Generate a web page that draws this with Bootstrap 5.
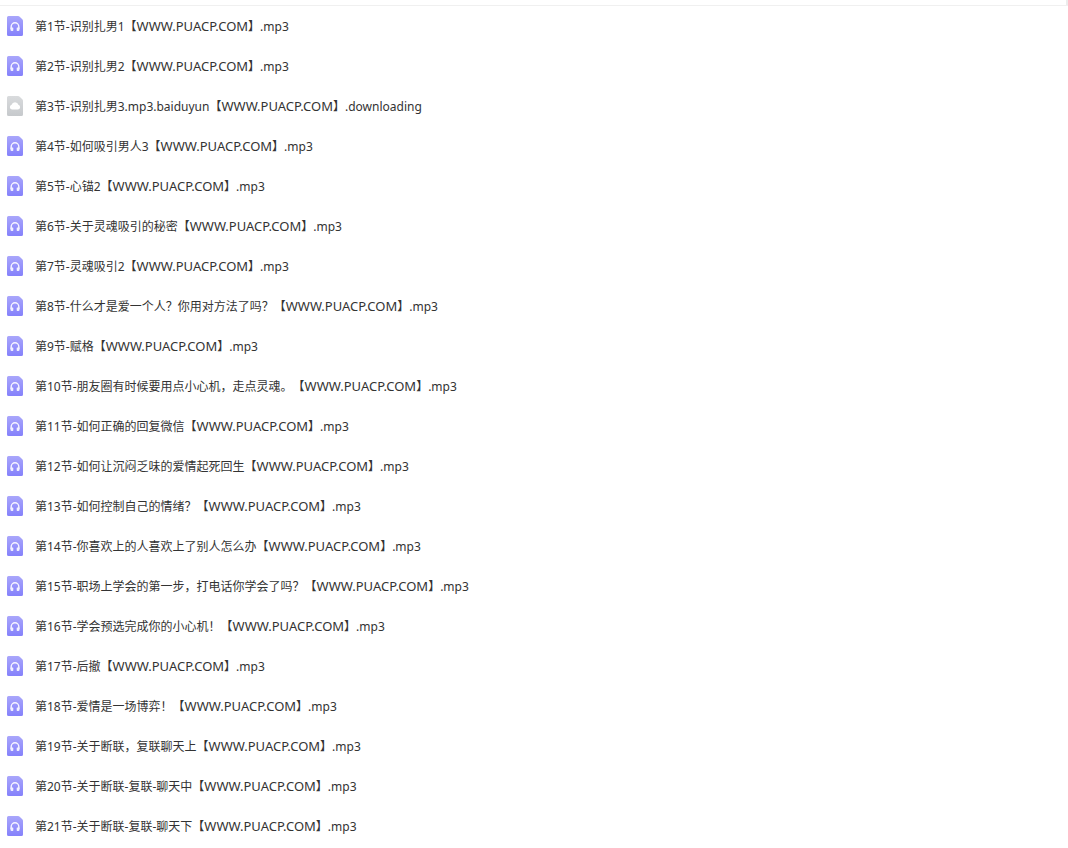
<!DOCTYPE html>
<html lang="zh-CN">
<head>
<meta charset="utf-8">
<meta name="viewport" content="width=device-width, initial-scale=1">
<title>文件列表</title>
<link href="https://cdn.jsdelivr.net/npm/bootstrap@5.3.0/dist/css/bootstrap.min.css" rel="stylesheet">
<style>
  body { font-family: "Noto Sans", "Noto Sans CJK SC", sans-serif; font-size: 12px; color: #333; background: #fff; text-spacing-trim: space-all; }
  .list-top { height: 6px; border-bottom: 1px solid #f0f0f0; }
  .list-top::after { content: ""; width: 2px; margin-left: auto; background: #ececec; }
  .file-row { height: 40px; padding: 0 7px; gap: 12px; line-height: 20px; }
  .file-icon { width: 16px; height: 20px; }
  .site { font-size: 13px; }
</style>
</head>
<body>
<svg width="0" height="0" class="position-absolute" aria-hidden="true">
  <linearGradient id="g-audio" x1="0" y1="0" x2="0" y2="1"><stop offset="0" stop-color="#a9a6fb"/><stop offset="1" stop-color="#8581fb"/></linearGradient>
  <linearGradient id="g-cloud" x1="0" y1="0" x2="0" y2="1"><stop offset="0" stop-color="#d9dbdd"/><stop offset="1" stop-color="#c6c9cc"/></linearGradient>
  <symbol id="audio" viewBox="0 0 16 20">
    <path d="M1.500 0H11q1 0 1.700.7l2.600 2.600Q16 4 16 5v13.500a1.500 1.500 0 0 1-1.500 1.500h-13A1.500 1.500 0 0 1 0 18.500v-17A1.500 1.500 0 0 1 1.500 0z" fill="url(#g-audio)"/>
    <path d="M4.200 13v-2.400a3.800 3.800 0 0 1 7.600 0V13" fill="none" stroke="#f6f5ff" stroke-width="1.400"/>
    <path d="M3.500 11.500h2.200a.6.6 0 0 1 .6.600v2.200a.6.6 0 0 1-.6.600h-1a1.200 1.200 0 0 1-1.200-1.200zM12.500 11.500h-2.200a.6.6 0 0 0-.6.600v2.200a.6.6 0 0 0 .6.600h1a1.200 1.200 0 0 0 1.200-1.200z" fill="#f1f0ff"/>
  </symbol>
  <symbol id="cloud" viewBox="0 0 16 20">
    <path d="M1.500 0H11q1 0 1.700.7l2.600 2.600Q16 4 16 5v13.500a1.500 1.500 0 0 1-1.500 1.500h-13A1.500 1.500 0 0 1 0 18.500v-17A1.500 1.500 0 0 1 1.500 0z" fill="url(#g-cloud)"/>
    <path d="M5.200 13.500a2.400 2.400 0 0 1-.6-4.700 3.500 3.500 0 0 1 6.800 0 2.400 2.400 0 0 1-.6 4.700z" fill="#fff"/>
  </symbol>
</svg>
<div class="list-top d-flex"></div>
<main>
  <ul class="list-unstyled mb-0" id="files"></ul>
</main>
<script src="https://cdn.jsdelivr.net/npm/bootstrap@5.3.0/dist/js/bootstrap.bundle.min.js"></script>
<script>
  const files = [
    '识别扎男1', '识别扎男2', '识别扎男3.mp3.baiduyun', '如何吸引男人3', '心锚2',
    '关于灵魂吸引的秘密', '灵魂吸引2', '什么才是爱一个人？你用对方法了吗？', '赋格',
    '朋友圈有时候要用点小心机，走点灵魂。', '如何正确的回复微信', '如何让沉闷乏味的爱情起死回生',
    '如何控制自己的情绪？', '你喜欢上的人喜欢上了别人怎么办', '职场上学会的第一步，打电话你学会了吗？',
    '学会预选完成你的小心机！', '后撤', '爱情是一场博弈！', '关于断联，复联聊天上',
    '关于断联-复联-聊天中', '关于断联-复联-聊天下'
  ];
  document.getElementById('files').innerHTML = files.map((name, i) => {
    const partial = name.endsWith('.baiduyun');
    return `<li class="file-row d-flex align-items-center">
      <svg class="file-icon flex-shrink-0" aria-hidden="true"><use href="#${partial ? 'cloud' : 'audio'}"/></svg>
      <span class="text-nowrap">第${i + 1}节-${name}【<span class="site">WWW.PUACP.COM</span>】${partial ? '.downloading' : '.mp3'}</span>
    </li>`;
  }).join('');
</script>
</body>
</html>
